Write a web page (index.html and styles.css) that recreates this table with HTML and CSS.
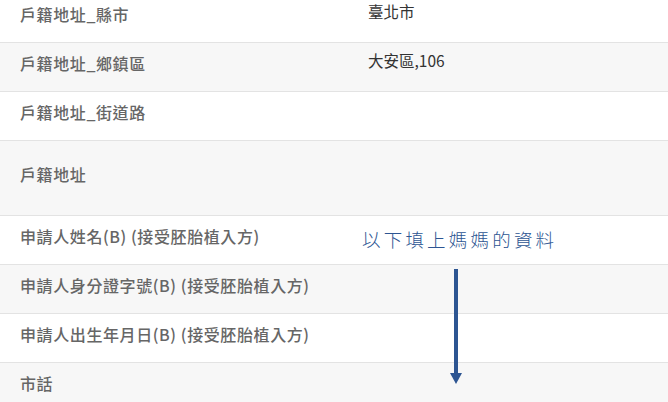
FILE: index.html
```html
<!DOCTYPE html>
<html lang="zh-Hant">
<head>
<meta charset="utf-8">
<link rel="stylesheet" href="styles.css">
</head>
<body>
<div class="sheet">
  <div class="list">
    <div class="row"><div class="label">戶籍地址_縣市</div><div class="value">臺北市</div></div>
    <div class="row alt"><div class="label">戶籍地址_鄉鎮區</div><div class="value">大安區,106</div></div>
    <div class="row"><div class="label">戶籍地址_街道路</div><div class="value"></div></div>
    <div class="row alt tall"><div class="label">戶籍地址</div><div class="value"></div></div>
    <div class="row"><div class="label">申請人姓名(B) (接受胚胎植入方)</div><div class="value"></div></div>
    <div class="row alt"><div class="label">申請人身分證字號(B) (接受胚胎植入方)</div><div class="value"></div></div>
    <div class="row"><div class="label">申請人出生年月日(B) (接受胚胎植入方)</div><div class="value"></div></div>
    <div class="row alt"><div class="label">市話</div><div class="value"></div></div>
  </div>
  <div class="note">以下填上媽媽的資料</div>
  <svg class="arrow" width="14" height="116" viewBox="0 0 14 116">
    <rect x="5" y="0" width="4" height="106" fill="#2d5592"/>
    <polygon points="1,104 13,104 7,115" fill="#2d5592"/>
  </svg>
</div>
</body>
</html>
```

FILE: styles.css
```css
html, body {
  margin: 0;
  padding: 0;
  background: #ffffff;
  overflow: hidden;
}
body {
  width: 668px;
  height: 402px;
  font-family: "Noto Sans CJK TC", "Noto Sans", sans-serif;
}
.sheet {
  position: relative;
  margin-top: -6px;
}
.list {
  display: flex;
  flex-direction: column;
}
.row {
  display: grid;
  grid-template-columns: 348px 1fr;
  padding: 9px 0 17px 20px;
  border-bottom: 1px solid #e3e3e3;
  background: #ffffff;
  height: 22px;
}
.row.alt {
  background: #f7f7f7;
}
.row.tall {
  padding-top: 22px;
  padding-bottom: 30px;
}
.label {
  font-size: 16px;
  line-height: 22px;
  color: #666666;
  font-weight: 500;
  letter-spacing: 0.6px;
  white-space: nowrap;
}
.value {
  font-size: 15.5px;
  line-height: 17px;
  color: #333333;
  font-weight: 400;
}
.note {
  position: absolute;
  left: 362px;
  top: 233px;
  font-size: 18.5px;
  line-height: 24px;
  letter-spacing: 3.2px;
  color: #2d5592;
  font-weight: 300;
}
.arrow {
  position: absolute;
  left: 449px;
  top: 275px;
}
```
